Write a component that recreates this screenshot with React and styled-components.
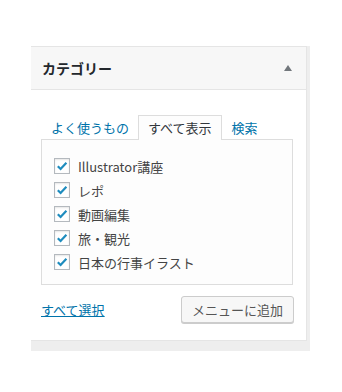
import React from 'react';
import styled, { createGlobalStyle } from 'styled-components';

const GlobalStyle = createGlobalStyle`
  body {
    margin: 0;
    background: #fff;
    font-family: "Noto Sans CJK JP", "Open Sans", sans-serif;
  }
`;

const Frame = styled.div`
  margin: 46px 0 0 31px;
  width: 276px;
  background: #eeeeee;
  padding: 0 3px 10px 0;
`;

const Panel = styled.div`
  background: #fff;
  border: 1px solid #e5e5e5;
  border-left: none;
`;

const Header = styled.div`
  height: 42px;
  display: flex;
  align-items: center;
  justify-content: space-between;
  padding: 0 14px 0 11px;
  background: #f7f7f7;
  border-bottom: 1px solid #e5e5e5;
`;

const Title = styled.h3`
  margin: 0;
  font-size: 14px;
  font-weight: 600;
  color: #23282d;
`;

const Arrow = styled.span`
  width: 0;
  height: 0;
  border-left: 4px solid transparent;
  border-right: 4px solid transparent;
  border-bottom: 6px solid #72777c;
`;

const Body = styled.div`
  padding: 25px 13px 17px 10px;
`;

const Tabs = styled.div`
  display: flex;
  align-items: flex-end;
  padding-left: 9px;
  margin-bottom: -1px;
`;

const Tab = styled.span`
  font-size: 13px;
  line-height: 23px;
  padding: 0 9px 1px;
  color: ${p => (p.$active ? '#32373c' : '#0073aa')};
  background: ${p => (p.$active ? '#fdfdfd' : 'transparent')};
  border: 1px solid ${p => (p.$active ? '#dddddd' : 'transparent')};
  border-bottom: none;
  &:first-child {
    padding-left: 0;
    padding-right: 8px;
  }
`;

const TabPanel = styled.div`
  border: 1px solid #dddddd;
  background: #fdfdfd;
  padding: 18px 12px 0;
  box-sizing: border-box;
  height: 146px;
`;

const Row = styled.label`
  display: flex;
  align-items: center;
  height: 16px;
  margin-bottom: 8px;
  font-size: 13px;
  color: #444;
`;

const Box = styled.span`
  width: 16px;
  height: 16px;
  box-sizing: border-box;
  border: 1px solid #b4b9be;
  background: #fff;
  box-shadow: inset 0 1px 2px rgba(0, 0, 0, 0.1);
  margin-right: 8px;
  display: flex;
  align-items: center;
  justify-content: center;
  flex-shrink: 0;
`;

const Actions = styled.div`
  display: flex;
  justify-content: space-between;
  align-items: center;
  margin-top: 11px;
`;

const Link = styled.a`
  font-size: 13px;
  color: #0073aa;
  text-decoration: underline;
`;

const Button = styled.button`
  width: 113px;
  height: 27px;
  font-family: inherit;
  font-size: 13px;
  color: #555;
  background: #f7f7f7;
  border: 1px solid #cccccc;
  border-radius: 3px;
  box-shadow: 0 1px 0 #cccccc;
  padding: 0;
  margin-right: -1px;
`;

const Check = () => (
  <svg width="12" height="12" viewBox="0 0 12 12">
    <path d="M1.8 6.2 L4.6 9 L10.4 2.8" fill="none" stroke="#1e8cbe" strokeWidth="2.2" />
  </svg>
);

const items = ['Illustrator講座', 'レポ', '動画編集', '旅・観光', '日本の行事イラスト'];

const App = () => (
  <>
    <GlobalStyle />
    <Frame>
      <Panel>
        <Header>
          <Title>カテゴリー</Title>
          <Arrow />
        </Header>
        <Body>
          <Tabs>
            <Tab>よく使うもの</Tab>
            <Tab $active>すべて表示</Tab>
            <Tab>検索</Tab>
          </Tabs>
          <TabPanel>
            {items.map(item => (
              <Row key={item}>
                <Box><Check /></Box>
                {item}
              </Row>
            ))}
          </TabPanel>
          <Actions>
            <Link href="#">すべて選択</Link>
            <Button>メニューに追加</Button>
          </Actions>
        </Body>
      </Panel>
    </Frame>
  </>
);

export default App;
